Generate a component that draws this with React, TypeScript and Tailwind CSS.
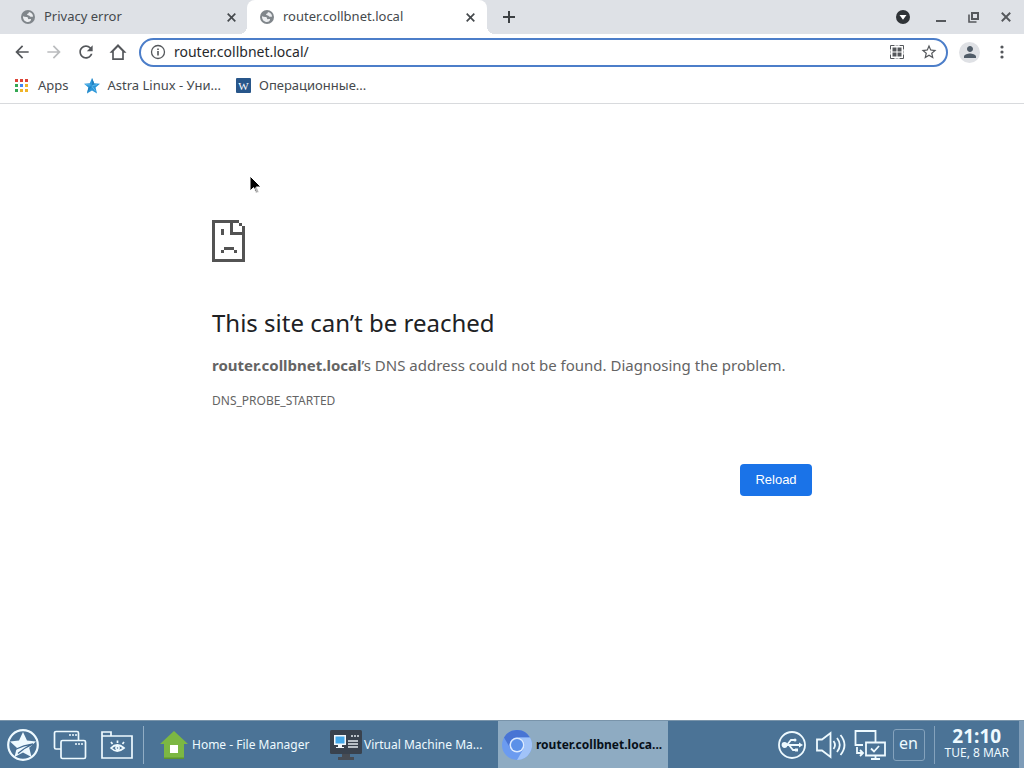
import React, { useState } from "react";

const bookmarks = [
  { name: "Apps", icon: <AppsIcon />, gap: "gap-[9px] mr-[15px]" },
  { name: "Astra Linux - Уни...", icon: <AstraStar />, gap: "gap-2 mr-[15px]" },
  { name: "Операционные...", icon: <WikiIcon />, gap: "gap-2" },
];

function GlobeIcon() {
  return (
    <svg viewBox="0 0 14 14" className="size-[14px] shrink-0">
      <circle cx="7" cy="7" r="7" fill="#80868b" />
      <path
        d="M2 6.2c1.200.5 2.300.9 3.600.8.9 0 1.500.7 1.400 1.500 0 .7 1 .8 2 .6.8-.2 1.200.2 1 .9-.5 1.300-1.600 2-3 2C4.100 12 1.800 9.600 2 6.200zM7.800 1.900c.2 1-.4 1.600-1.200 1.800-.7.2-.6 1-.1 1.300.8.5 1.900.3 2.400 1.200.5.8 1.600.8 3.200.4-.2-2.700-1.800-4.500-4.300-4.700z"
        fill="#eceef1"
      />
    </svg>
  );
}

function CloseIcon({ size = "size-[9px]" }: { size?: string }) {
  return (
    <svg viewBox="0 0 9 9" className={size} fill="none" stroke="currentColor" strokeWidth="1.7">
      <path d="M.7.7l7.600 7.600M8.300.7L.7 8.300" />
    </svg>
  );
}

function AppsIcon() {
  const colors = ["#dc4437", "#dc4437", "#dc4437", "#34a853", "#4285f4", "#f0b429", "#34a853", "#f0b429", "#f0b429"];
  return (
    <svg viewBox="0 0 14 14" className="size-[14px] shrink-0">
      {colors.map((color, idx) => (
        <rect key={idx} x={(idx % 3) * 5} y={Math.floor(idx / 3) * 5} width="3" height="3" fill={color} />
      ))}
    </svg>
  );
}

function AstraStar() {
  return (
    <svg viewBox="0 0 16 16" className="size-4 shrink-0">
      <path d="M8 0l2.200 5.200 5.800.5-4.400 3.700L13 15.600 8 12.400 3 15.600l1.400-6.200L0 5.700l5.800-.5z" fill="#2b96d8" />
      <path d="M8 0l2.200 5.200L8 8zM4.400 9.400L8 8l-5 7.600z" fill="#2380bf" />
      <path d="M1.500 6.500l5 .5M8 8l5-1.500M8 8.500l3.500 4.500" stroke="#6cc0ee" strokeWidth=".8" fill="none" />
    </svg>
  );
}

function WikiIcon() {
  return (
    <svg viewBox="0 0 15 15" className="size-[15px] shrink-0">
      <rect width="15" height="15" rx="1" fill="#28568a" />
      <text x="7.5" y="11.500" textAnchor="middle" fontSize="11" fill="#fff" fontFamily="Liberation Serif, serif">
        W
      </text>
    </svg>
  );
}

function Tab({ title, active = false }: { title: string; active?: boolean }) {
  return (
    <div
      className={
        active
          ? "relative flex h-full w-60 items-center rounded-t-lg bg-white pr-3 pl-[13px]"
          : "flex h-full w-[239px] items-center pr-[11px] pl-[13px]"
      }
    >
      {active && (
        <>
          <i className="absolute bottom-0 -left-2 size-2 bg-[radial-gradient(circle_at_0_0,transparent_8px,white_8px)]" />
          <i className="absolute -right-2 bottom-0 size-2 bg-[radial-gradient(circle_at_100%_0,transparent_8px,white_8px)]" />
        </>
      )}
      <GlobeIcon />
      <span className="ml-[9px] flex-1 truncate">{title}</span>
      <button aria-label="Close tab" className="grid size-[9px] place-items-center">
        <CloseIcon />
      </button>
    </div>
  );
}

function TabStrip() {
  return (
    <div className="flex h-[34px] items-center bg-[#dee1e6] pl-2 text-[13px] text-[#45494d]">
      <Tab title="Privacy error" />
      <Tab title="router.collbnet.local" active />
      <button aria-label="New tab" className="ml-4 grid size-3">
        <svg viewBox="0 0 12 12" stroke="#3c4043" strokeWidth="2">
          <path d="M6 0v12M0 6h12" />
        </svg>
      </button>
      <div className="ml-auto flex items-center gap-[18px] pr-[13px] text-[#55585c]">
        <button aria-label="Search tabs" className="mr-2 size-[14px]">
          <svg viewBox="0 0 14 14">
            <circle cx="7" cy="7" r="7" fill="#2f3337" />
            <path d="M3.500 5h7L7 9.800z" fill="#fff" />
          </svg>
        </button>
        <button aria-label="Minimize" className="mr-1 size-[10px]">
          <svg viewBox="0 0 10 10">
            <path d="M0 9h10" stroke="currentColor" strokeWidth="2" />
          </svg>
        </button>
        <button aria-label="Restore" className="mr-1 size-[11px]">
          <svg viewBox="0 0 11 11" fill="none" stroke="currentColor" strokeWidth="2">
            <path d="M4 1h6v6H4z" />
            <path d="M1 2.500V10h7.500" strokeWidth="1.600" />
          </svg>
        </button>
        <button aria-label="Close window" className="size-[10px]">
          <CloseIcon size="size-[10px]" />
        </button>
      </div>
    </div>
  );
}

function NavButton({ label, d, color = "fill-[#54575b]" }: { label: string; d: string; color?: string }) {
  return (
    <button aria-label={label} className="size-5">
      <svg viewBox="0 0 24 24" className={color}>
        <path d={d} />
      </svg>
    </button>
  );
}

function Toolbar() {
  const [url, setUrl] = useState("router.collbnet.local/");
  return (
    <div className="flex h-9 items-center pl-3">
      <div className="flex gap-3">
        <NavButton label="Back" d="M20 11H7.830l5.590-5.590L12 4l-8 8 8 8 1.410-1.410L7.830 13H20v-2z" />
        <NavButton label="Forward" color="fill-[#babcbe]" d="M12 4l-1.410 1.410L16.170 11H4v2h12.170l-5.580 5.590L12 20l8-8z" />
        <NavButton
          label="Reload"
          d="M17.650 6.350C16.200 4.900 14.210 4 12 4c-4.420 0-7.990 3.580-7.990 8s3.570 8 7.990 8c3.730 0 6.840-2.550 7.730-6h-2.080c-.82 2.330-3.040 4-5.650 4-3.310 0-6-2.690-6-6s2.690-6 6-6c1.660 0 3.140.69 4.220 1.780L13 11h7V4l-2.350 2.350z"
        />
        <NavButton label="Home" d="M12 2.500L1.800 12.800H5V21.500h14v-8.700h3.200L12 2.500zM17 19.500H7v-8.400l5-5.200 5 5.200v8.400z" />
      </div>
      <div className="ml-[11px] flex h-[29px] flex-1 items-center rounded-full border-2 border-[#4c7ec9] pr-2 pl-[9px]">
        <label htmlFor="address" aria-label="Address">
          <svg viewBox="0 0 16 16" className="size-4 shrink-0">
            <circle cx="8" cy="8" r="6.500" fill="none" stroke="#54575b" strokeWidth="1.300" />
            <path d="M7.200 7h1.600v4.500H7.200zM7.200 4.400h1.600V6H7.200z" fill="#54575b" />
          </svg>
        </label>
        <input
          id="address"
          type="text"
          aria-label="Address"
          value={url}
          onChange={(e) => setUrl(e.target.value)}
          className="ml-2 min-w-0 flex-1 text-sm text-[#27292c] outline-none"
        />
        <button aria-label="QR code" className="mr-4 size-[14px]">
          <svg viewBox="0 0 14 14">
            <path d="M4.500 .5h-4v4M9.500 .5h4v4M13.500 9.500v4h-4M4.500 13.500h-4v-4" fill="none" stroke="#54575b" />
            <path d="M.5 5.500v3M13.500 5.500v3M5.500 .5h3M5.500 13.500h3" stroke="#b4b6b8" />
            <path d="M2.500 2.500h4v4h-4zM7.500 2.500h4v4h-4zM2.500 7.500h4v4h-4zM7.500 7.500h4v4h-4z" fill="#54575b" />
          </svg>
        </button>
        <button aria-label="Bookmark this tab" className="size-[18px]">
          <svg viewBox="0 0 24 24" fill="#54575b">
            <path d="M22 9.240l-7.190-.62L12 2 9.190 8.630 2 9.240l5.460 4.730L5.820 21 12 17.270 18.180 21l-1.630-7.030L22 9.240zM12 15.400l-3.760 2.270 1-4.280-3.320-2.880 4.380-.38L12 6.100l1.710 4.040 4.380.38-3.320 2.880 1 4.280L12 15.400z" />
          </svg>
        </button>
      </div>
      <button aria-label="Profile" className="ml-[11px] grid size-[21px] place-items-center rounded-full bg-[#dfe1e5]">
        <svg viewBox="4 4 16 16" className="size-3" fill="#505c68">
          <path d="M12 12c2.210 0 4-1.790 4-4s-1.790-4-4-4-4 1.790-4 4 1.790 4 4 4zm0 2c-2.670 0-8 1.340-8 4v2h16v-2c0-2.660-5.330-4-8-4z" />
        </svg>
      </button>
      <button aria-label="Menu" className="mx-[14px] size-4">
        <svg viewBox="0 0 16 16" fill="#54575b">
          <circle cx="8" cy="3" r="1.600" />
          <circle cx="8" cy="8" r="1.600" />
          <circle cx="8" cy="13" r="1.600" />
        </svg>
      </button>
    </div>
  );
}

function SadPage() {
  return (
    <svg viewBox="0 0 33 42" className="h-[42px] w-[33px]" fill="#535353" shapeRendering="crispEdges">
      <path d="M0 0h27v3H21v9h12v3H18V3H3v36h27V15h3v27H0zM27 3h3v3h-3zM30 6h3v9h-3zM9 9h3v6H9zM12 27h10v3H12zM9 30h3v3H9zM22 30h3v3h-3z" />
    </svg>
  );
}

function ErrorPage() {
  return (
    <main className="relative flex-1">
      <svg viewBox="0 0 14 20" className="absolute top-[71px] left-[249px] h-5 w-[14px]">
        <path d="M1 1v15l3.600-3.400L7 18l2.500-1.100L7.200 12H12z" fill="#000" stroke="#fff" />
        <path d="M5.500 13L7.500 17.500l2-.9L7.500 12" fill="#bbb" />
      </svg>
      <div className="mx-auto flex max-w-[600px] flex-col pt-29 text-[15px] text-[#646464]">
        <SadPage />
        <h1 className="mt-11 text-2xl leading-[34px] text-[#202124]">This site can’t be reached</h1>
        <p className="mt-[13px] leading-6">
          <strong>router.collbnet.local</strong>’s DNS address could not be found. Diagnosing the problem.
        </p>
        <p className="mt-[15px] text-xs leading-[18px]">DNS_PROBE_STARTED</p>
        <button className="mt-[54px] h-8 w-[72px] self-end rounded bg-[#1a73e8] font-['Liberation_Sans',sans-serif] text-[13px] text-white">
          Reload
        </button>
      </div>
    </main>
  );
}

function HomeIcon() {
  return (
    <svg viewBox="0 0 28 28" className="size-7 shrink-0">
      <path d="M14 0L0 13h4v15h20V13h4z" fill="#7cb743" />
      <path d="M4 26.500h20V28H4z" fill="#5d9430" />
      <path d="M10 14h8v8h-8z" fill="#fff" />
    </svg>
  );
}

function MachineIcon() {
  return (
    <svg viewBox="0 0 32 30" className="h-[30px] w-8 shrink-0">
      <rect width="32" height="24" rx="1.500" fill="#39424e" />
      <path d="M12 24h8v3h4v3H8v-3h4z" fill="#474c54" />
      <path d="M4 5h12v10H4z" fill="#f4f8fb" />
      <path d="M5.500 6.500h9v7h-9z" fill="#43a7e8" />
      <path d="M8 15h4v2h2v1H6v-1h2z" fill="#f4f8fb" />
      <path d="M21 6h2M24 6h2M27 6h2M18 11h10M18 14h10M18 17h10" stroke="#e4eaf0" strokeWidth="1.300" />
    </svg>
  );
}

function ChromiumIcon() {
  return (
    <svg viewBox="0 0 30 30" className="size-[30px] shrink-0">
      <circle cx="15" cy="15" r="15" fill="#6b9bf0" />
      <path d="M2 7.500A15 15 0 0 1 28 7.500H15A7.500 7.500 0 0 0 8.500 18.700z" fill="#4874d4" />
      <path d="M28 7.500A15 15 0 0 1 15 30l6.500-11.300A7.500 7.500 0 0 0 15 7.500z" fill="#a1c3f8" />
      <circle cx="15" cy="15" r="7.500" fill="#dceafe" />
      <circle cx="15" cy="15" r="6" fill="#5b90e8" />
    </svg>
  );
}

function Launchers() {
  return (
    <div className="flex items-center pl-[6px] text-[#eefaff]">
      <button aria-label="Start" className="size-[34px]">
        <svg viewBox="0 0 34 34">
          <circle cx="17" cy="17" r="14.800" fill="none" stroke="currentColor" strokeWidth="2.200" />
          <path d="M17 4l4 8.600 9 .9-6.800 6.200L25.500 29 17 24.500 8.500 29l2.300-9.300L4 13.500l9-.9z" fill="currentColor" />
          <path d="M9 21.500q9-4.500 18-5.500-9 4-15 9.500" fill="none" stroke="#426b91" strokeWidth="1.300" />
        </svg>
      </button>
      <button aria-label="Show windows" className="ml-[13px] h-[30px] w-[34px]">
        <svg viewBox="0 0 34 30" fill="none" stroke="currentColor" strokeWidth="1.700">
          <path d="M8 19H3a1.500 1.500 0 0 1-1.500-1.500V3A1.500 1.500 0 0 1 3 1.500h21A1.500 1.500 0 0 1 25.500 3v7" />
          <rect x="8" y="10.500" width="24.500" height="18" rx="1.500" />
          <path d="M16 5h2M19 5h2M22 5h2M22 14h2M25 14h2M28 14h2" />
        </svg>
      </button>
      <button aria-label="Files" className="ml-[14px] h-7 w-8">
        <svg viewBox="0 0 32 28" fill="none" stroke="currentColor" strokeWidth="1.700">
          <path d="M1 27V1h9v4h21v22zM1 5h9" />
          <path d="M10 17q6-6 13 0-7 6-13 0z" />
          <circle cx="16.500" cy="17" r="1.600" />
          <path d="M16.500 12V9.500M11.500 13L10 11M21.500 13l1.500-2" />
        </svg>
      </button>
      <i className="ml-[10px] h-[38px] w-px bg-[#91adc4]" />
    </div>
  );
}

function Tray() {
  return (
    <div className="ml-auto flex items-center text-[#eefaff]">
      <button aria-label="USB devices" className="size-7">
        <svg viewBox="0 0 28 28" fill="none" stroke="currentColor" strokeWidth="1.800">
          <circle cx="14" cy="14" r="13" />
          <path d="M6 14h17M9 14l4-5h3M11 14l4 5h4" />
          <circle cx="6.500" cy="14" r="2" fill="currentColor" />
          <path d="M21 11.500l4 2.500-4 2.500z" fill="currentColor" stroke="none" />
          <circle cx="17" cy="9" r="1.500" fill="currentColor" stroke="none" />
          <path d="M17 17.500h3v3h-3z" fill="currentColor" stroke="none" />
        </svg>
      </button>
      <button aria-label="Volume" className="ml-[9px] h-7 w-[31px]">
        <svg viewBox="0 0 31 28" fill="none" stroke="currentColor" strokeWidth="1.800">
          <path d="M2 8.500h5L15.500 2v24L7 19.500H2z" />
          <path d="M18.500 10q3 4 0 8M22 7q5.500 7 0 14M25.500 4q8 10 0 20" />
        </svg>
      </button>
      <button aria-label="Network" className="ml-2 h-[30px] w-8">
        <svg viewBox="0 0 32 30" fill="none" stroke="currentColor" strokeWidth="1.800">
          <path d="M9 15H1.500V1h20v11" />
          <path d="M12 12.500h19v13H12zM21.500 25.500V29M17 29h9" />
          <path d="M17 18.500l3 3 5-5.500M3 17v6h6M6 20l3 3-3 3" />
        </svg>
      </button>
      <button className="ml-[7px] grid size-8 place-items-center rounded-[3px] border border-[#84a2bc] pb-[3px] text-base leading-6">
        en
      </button>
      <i className="ml-[9px] h-[38px] w-px bg-[#84a2bc]" />
      <div className="ml-[10px] pb-[2px] text-center">
        <div className="text-[19px] leading-[18px] font-bold">21:10</div>
        <div className="text-xs leading-4">TUE, 8 MAR</div>
      </div>
      <i className="ml-[10px] h-[47px] w-[5px] bg-[#7e9cb8]" />
    </div>
  );
}

function Taskbar() {
  return (
    <footer className="flex h-12 border-t border-[#7994aa] bg-[#4b7396] text-xs">
      <Launchers />
      <button className="ml-4 flex w-[170px] items-center text-[#eefaff]">
        <HomeIcon />
        <span className="ml-1">Home - File Manager</span>
      </button>
      <button className="flex w-[168px] items-center text-[#eefaff]">
        <MachineIcon />
        <span className="ml-[2px]">Virtual Machine Ma...</span>
      </button>
      <button className="flex w-[170px] items-center bg-[#8eabc2] pl-1 font-bold text-[#071019]">
        <ChromiumIcon />
        <span className="ml-1">router.collbnet.loca...</span>
      </button>
      <Tray />
    </footer>
  );
}

function App() {
  return (
    <div className="flex min-h-screen flex-col bg-white font-['Noto_Sans',sans-serif]">
      <header className="border-b border-[#d8dadd]">
        <TabStrip />
        <Toolbar />
        <nav className="flex h-[33px] items-center pb-[2px] pl-[15px] text-[13px] text-[#45494d]">
          {bookmarks.map((bookmark) => (
            <a key={bookmark.name} href="#" className={`flex items-center ${bookmark.gap}`}>
              {bookmark.icon}
              {bookmark.name}
            </a>
          ))}
        </nav>
      </header>
      <ErrorPage />
      <Taskbar />
    </div>
  );
}

export default App;
